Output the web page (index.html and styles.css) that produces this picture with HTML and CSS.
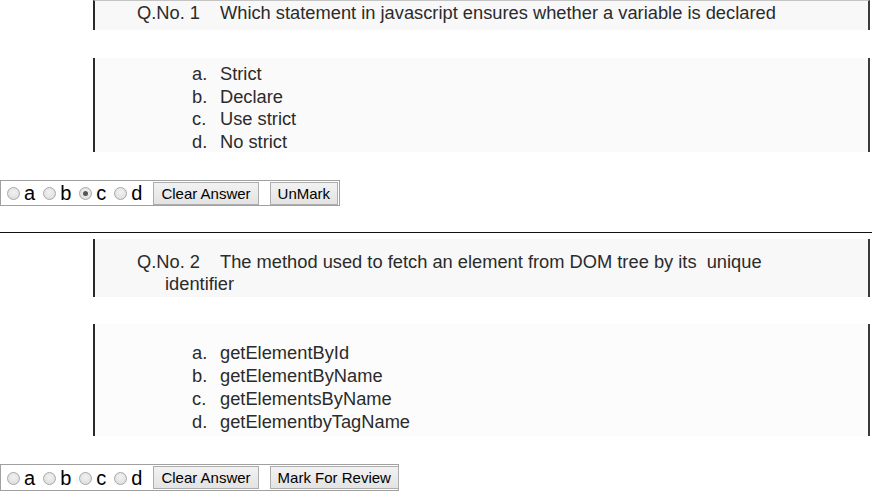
FILE: index.html
```html
<!DOCTYPE html>
<html>
<head>
<meta charset="utf-8">
<link rel="stylesheet" href="styles.css">
</head>
<body>
<div class="page">
  <div class="qimg q1">
    <p class="qtext"><span class="qno">Q.No. 1</span>Which statement in javascript ensures whether a variable is declared</p>
  </div>
  <div class="qimg opts1">
    <ol class="opts">
      <li><span class="ol">a.</span>Strict</li>
      <li><span class="ol">b.</span>Declare</li>
      <li><span class="ol">c.</span>Use strict</li>
      <li><span class="ol">d.</span>No strict</li>
    </ol>
  </div>
  <div class="answer ans1">
    <label class="choice"><input type="radio" name="q1" class="rad">a</label>
    <label class="choice"><input type="radio" name="q1" class="rad">b</label>
    <label class="choice"><input type="radio" name="q1" class="rad" checked>c</label>
    <label class="choice"><input type="radio" name="q1" class="rad">d</label>
    <button class="btn">Clear Answer</button>
    <button class="btn">UnMark</button>
  </div>
  <hr class="sep">
  <div class="qimg q2">
    <p class="qtext wrap"><span class="qno">Q.No. 2</span>The method used to fetch an element from DOM tree by its&nbsp; unique<br>identifier</p>
  </div>
  <div class="qimg opts2">
    <ol class="opts">
      <li><span class="ol">a.</span>getElementById</li>
      <li><span class="ol">b.</span>getElementByName</li>
      <li><span class="ol">c.</span>getElementsByName</li>
      <li><span class="ol">d.</span>getElementbyTagName</li>
    </ol>
  </div>
  <div class="answer ans2">
    <label class="choice"><input type="radio" name="q2" class="rad">a</label>
    <label class="choice"><input type="radio" name="q2" class="rad">b</label>
    <label class="choice"><input type="radio" name="q2" class="rad">c</label>
    <label class="choice"><input type="radio" name="q2" class="rad">d</label>
    <button class="btn">Clear Answer</button>
    <button class="btn">Mark For Review</button>
  </div>
</div>
</body>
</html>
```
FILE: styles.css
```css
html, body {
  margin: 0;
  padding: 0;
  background: #ffffff;
}
.page {
  display: flex;
  flex-direction: column;
  align-items: flex-start;
  font-family: "Liberation Sans", Arial, sans-serif;
}
.qimg {
  box-sizing: border-box;
  margin-left: 93px;
  width: 777px;
  background: #f8f8f8;
  border-left: 2px solid #2a2a2a;
  border-right: 2px solid #3a3a3a;
  color: #2b2b2b;
  font-size: 18.3px;
}
.q1 {
  height: 30px;
  border-top: 1px solid #c4c4c4;
}
.opts1 {
  margin-top: 28px;
  height: 94px;
  padding-top: 5px;
  background: #fafafa;
}
.q2 {
  margin-top: 6px;
  height: 58px;
  padding-top: 12px;
}
.opts2 {
  margin-top: 27px;
  height: 112px;
  padding-top: 17px;
  background: #fcfcfc;
}
.qtext {
  margin: 0;
  padding-left: 42px;
  line-height: 24px;
  white-space: nowrap;
}
.wrap {
  line-height: 22px;
  padding-left: 70px;
  text-indent: -28px;
}
.qno {
  display: inline-block;
  width: 83px;
  text-indent: 0;
}
.opts {
  list-style: none;
  margin: 0;
  padding: 0 0 0 97px;
}
.opts1 .opts li {
  line-height: 22.7px;
}
.opts2 .opts li {
  line-height: 23px;
}
.ol {
  display: inline-block;
  width: 28px;
}
.answer {
  box-sizing: border-box;
  display: flex;
  align-items: center;
  margin-top: 28px;
  height: 26px;
  border: 1px solid #a0a0a0;
  padding: 0 0 0 6px;
  font-size: 20px;
  color: #000;
}
.ans1 {
  width: 340px;
}
.ans2 {
  margin-top: 28px;
  height: 27px;
  width: 399px;
}
.choice {
  display: flex;
  align-items: center;
  margin-right: 8px;
  line-height: 24px;
}
.rad {
  -webkit-appearance: none;
  appearance: none;
  box-sizing: border-box;
  width: 13px;
  height: 13px;
  margin: 1px 4px 0 0;
  border: 1px solid #a8a8a8;
  border-radius: 50%;
  background: radial-gradient(circle at 50% 40%, #f2f2f2, #d9d9d9);
  position: relative;
}
.rad:checked::after {
  content: "";
  position: absolute;
  left: 3px;
  top: 3px;
  width: 5px;
  height: 5px;
  border-radius: 50%;
  background: #555;
}
.btn {
  box-sizing: border-box;
  flex-shrink: 0;
  white-space: nowrap;
  height: 23px;
  margin: 0 11px 0 3px;
  padding: 0 7px;
  font-family: "Liberation Sans", Arial, sans-serif;
  font-size: 15px;
  color: #000;
  background: linear-gradient(#f2f2f2, #e3e3e3);
  border: 1px solid #adadad;
  border-radius: 0;
}
.btn + .btn {
  margin: 0;
}
.sep {
  box-sizing: border-box;
  width: 872px;
  margin: 26px 0 0 0;
  border: 0;
  border-top: 1px solid #111;
  height: 1px;
}
```
